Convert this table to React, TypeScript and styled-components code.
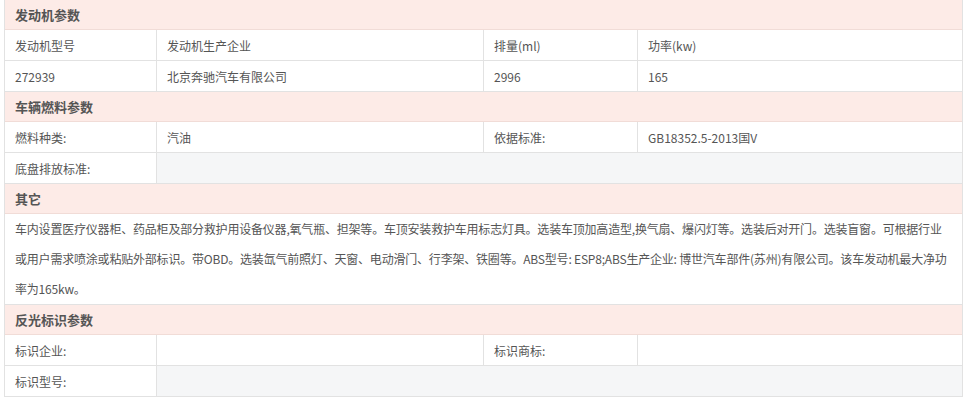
import React from "react";
import styled, { createGlobalStyle } from "styled-components";

const Global = createGlobalStyle`
  html, body { margin: 0; padding: 0; background: #fff; }
  body { font-family: "Noto Sans CJK SC", "Liberation Sans", sans-serif; }
`;

const Page = styled.div`
  width: 959px;
  margin-left: 4px;
  border-left: 1px solid #e2e2e2;
  border-right: 1px solid #e2e2e2;
  box-sizing: border-box;
`;

const SectionHeader = styled.div`
  height: 29px;
  background: #fdebe7;
  border-bottom: 1px solid #f1dcd7;
  display: flex;
  align-items: center;
  padding-left: 10px;
  font-size: 13px;
  font-weight: bold;
  color: #555;
`;

const Row = styled.div`
  display: grid;
  grid-template-columns: 152px 327px 154px 1fr;
  border-bottom: 1px solid #e2e2e2;
`;

const Cell = styled.div<{ $span?: number; $muted?: boolean; $last?: boolean }>`
  grid-column: span ${(p) => p.$span ?? 1};
  height: 30px;
  display: flex;
  align-items: center;
  padding-left: 10px;
  font-size: 12px;
  color: #555;
  background: ${(p) => (p.$muted ? "#f5f6f7" : "#fff")};
  border-right: ${(p) => (p.$last ? "none" : "1px solid #e2e2e2")};
  overflow: hidden;
  white-space: nowrap;
`;

const Paragraph = styled.div`
  padding: 0 0 0 10px;
  font-size: 12px;
  line-height: 30px;
  color: #555;
  border-bottom: 1px solid #e2e2e2;
  white-space: nowrap;
  letter-spacing: -0.2px;
`;

type Pair = { text: string; span?: number; muted?: boolean };

const DataRow = ({ cells }: { cells: Pair[] }) => (
  <Row>
    {cells.map((c, i) => (
      <Cell key={i} $span={c.span} $muted={c.muted} $last={i === cells.length - 1}>
        {c.text}
      </Cell>
    ))}
  </Row>
);

const lines = [
  "车内设置医疗仪器柜、药品柜及部分救护用设备仪器,氧气瓶、担架等。车顶安装救护车用标志灯具。选装车顶加高造型,换气扇、爆闪灯等。选装后对开门。选装盲窗。可根据行业",
  "或用户需求喷涂或粘贴外部标识。带OBD。选装氙气前照灯、天窗、电动滑门、行李架、铁圈等。ABS型号: ESP8;ABS生产企业: 博世汽车部件(苏州)有限公司。该车发动机最大净功",
  "率为165kw。",
];

export default function App() {
  return (
    <>
      <Global />
      <Page>
        <SectionHeader>发动机参数</SectionHeader>
        <DataRow
          cells={[
            { text: "发动机型号" },
            { text: "发动机生产企业" },
            { text: "排量(ml)" },
            { text: "功率(kw)" },
          ]}
        />
        <DataRow
          cells={[
            { text: "272939" },
            { text: "北京奔驰汽车有限公司" },
            { text: "2996" },
            { text: "165" },
          ]}
        />
        <SectionHeader>车辆燃料参数</SectionHeader>
        <DataRow
          cells={[
            { text: "燃料种类:" },
            { text: "汽油" },
            { text: "依据标准:" },
            { text: "GB18352.5-2013国V" },
          ]}
        />
        <DataRow cells={[{ text: "底盘排放标准:" }, { text: "", span: 3, muted: true }]} />
        <SectionHeader>其它</SectionHeader>
        <Paragraph>
          {lines.map((l, i) => (
            <div key={i}>{l}</div>
          ))}
        </Paragraph>
        <SectionHeader>反光标识参数</SectionHeader>
        <DataRow
          cells={[
            { text: "标识企业:" },
            { text: "" },
            { text: "标识商标:" },
            { text: "" },
          ]}
        />
        <DataRow cells={[{ text: "标识型号:" }, { text: "", span: 3, muted: true }]} />
      </Page>
    </>
  );
}
